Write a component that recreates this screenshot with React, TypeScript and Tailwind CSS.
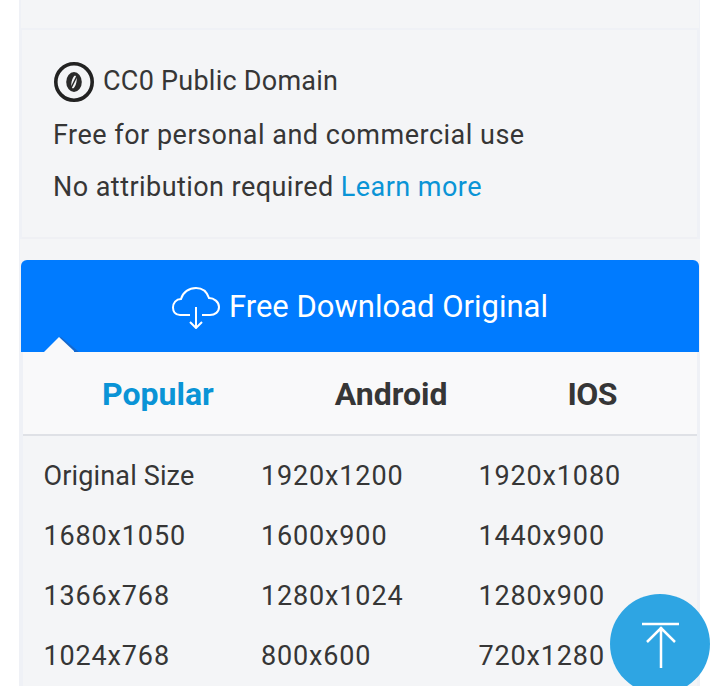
const rows = [
  ['Original Size', '1920x1200', '1920x1080'],
  ['1680x1050', '1600x900', '1440x900'],
  ['1366x768', '1280x1024', '1280x900'],
  ['1024x768', '800x600', '720x1280'],
];

const App = () => {
  return (
    <div className="relative h-[686px] w-[720px] overflow-hidden bg-white font-['Roboto',sans-serif] text-[#363636]">
      <div className="ml-[19px] h-full w-[681px] bg-[#eff1f6] pl-[2px] pr-px">
        <div className="h-[28px] bg-[#f4f5f7]" />
        <div className="ml-px mr-[2px] mt-[2px] h-[209px] border-b-2 border-[#eff0f4] bg-[#f4f5f7] pl-[31px] pt-[30px] text-[27px] tracking-[0.45px]">
          <div className="flex h-[44px] items-center gap-[8px] tracking-[0.25px]">
            <svg width="42" height="42" viewBox="0 0 42 42">
              <circle cx="21" cy="21" r="18.2" fill="none" stroke="#222" strokeWidth="3.6" />
              <ellipse cx="21" cy="21" rx="7.8" ry="10" fill="#2a2a2a" />
              <ellipse cx="21" cy="21" rx="2.4" ry="6.5" fill="#f4f5f7" transform="rotate(12 21 21)" />
              <path d="M18 27 L24 15" stroke="#2a2a2a" strokeWidth="1.6" />
            </svg>
            <span className="pb-[2px]">CC0 Public Domain</span>
          </div>
          <p className="mt-[9px] h-[44px] leading-[44px] tracking-[0.5px]">Free for personal and commercial use</p>
          <p className="mt-[8px] h-[44px] leading-[44px]">
            No attribution required <span className="text-[#0a94d6]">Learn more</span>
          </p>
        </div>
        <div className="-mx-[1px] h-[21px] bg-[#f4f5f7]" />
        <div className="relative flex h-[92px] items-center justify-center gap-[9px] rounded-t-[6px] bg-[#007bff] pt-[2px] text-[31px] text-white">
          <svg className="mt-[2px]" width="48" height="42" viewBox="0 0 48 42" fill="none" stroke="#fff" strokeWidth="2">
            <path d="M18 28 H8 C3 28 1 24 1 20.5 C1 16 4 12 9 12 C11 5 17 1 24 1 C31 1 35 5 37 11 C42 11 47 15 47 20 C47 25 43 28 38 28 H30" />
            <path d="M24 20 V41 M18 35 L24 41 L30 35" />
          </svg>
          <span>Free Download Original</span>
          <svg className="absolute bottom-0 left-[22px]" width="38" height="15" viewBox="0 0 38 15">
            <polygon points="18,0 36,15 32,15 16,1" fill="#1668cc" />
            <polygon points="16,0 31,14 31,15 1,15 2,14" fill="#f9f9fa" />
          </svg>
        </div>
        <div className="mx-[2px] flex h-[84px] items-center border-b-2 border-[#dfe1e6] bg-[#f9f9fa] pt-[2px] text-[32px] font-bold">
          <span className="ml-[79px] text-[#0a94d6]">Popular</span>
          <span className="ml-[121px]">Android</span>
          <span className="ml-[120px] tracking-[-0.6px]">IOS</span>
        </div>
        <div className="mx-[2px] grid h-full grid-cols-[217.5px_217.5px_1fr] content-start bg-[#f4f5f7] pl-[20.5px] pt-[10px] text-[27px] tracking-[0.85px]">
          {rows.flat().map((cell) => (
            <div key={cell} className={cell === 'Original Size' ? 'h-[60px] leading-[60px] tracking-[0.15px]' : 'h-[60px] leading-[60px]'}>{cell}</div>
          ))}
        </div>
      </div>
      <div className="absolute left-[610px] top-[594px] flex h-[100px] w-[100px] items-center justify-center rounded-full bg-[#2ea5e3]">
        <svg width="40" height="50" viewBox="0 0 40 50" fill="none" stroke="#fff" strokeWidth="2.5">
          <path d="M2 5 H39 M21 8 V49 M7 23 L21 9 L35 23" />
        </svg>
      </div>
    </div>
  );
};

export default App;
